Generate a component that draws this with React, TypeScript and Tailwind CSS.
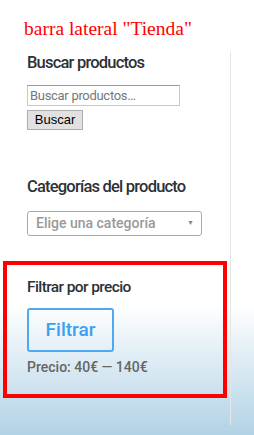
export default function App() {
  return (
    <div
      className="w-[254px] h-[435px] overflow-hidden bg-[linear-gradient(to_bottom,#ffffff_0%,#ffffff_70%,#b2d2e6_100%)]"
      style={{ fontFamily: "Roboto, 'Liberation Sans', sans-serif" }}
    >
      {/* title */}
      <div className="h-[52px] pl-[24px] pt-[17px]">
        <p
          className="text-[19.5px] leading-[24px] text-[#ff0000]"
          style={{ fontFamily: "'Liberation Serif', serif" }}
        >
          barra lateral "Tienda"
        </p>
      </div>

      {/* sidebar */}
      <div className="w-[231px] h-[373px] border-r border-[#e6e6e6]">
        <div className="pl-[27px]">
          <h2 className="text-[16.5px] leading-[22px] font-medium tracking-[-0.8px] text-[#2d3136]">
            Buscar productos
          </h2>
          <input
            type="text"
            placeholder="Buscar productos…"
            className="mt-[11px] block w-[153px] h-[21px] px-[2px] text-[13px] tracking-[-0.3px] border border-[#c8c8c8] border-t-[#999] bg-white placeholder:text-[#777] outline-none"
          />
          <button
            className="mt-[4px] block w-[56px] h-[20px] text-[13px] leading-[18px] text-black bg-[#e1e1e1] border border-[#adadad]"
            style={{ fontFamily: "'Liberation Sans', Arial, sans-serif" }}
          >
            Buscar
          </button>

          <h2 className="mt-[46px] text-[16.5px] leading-[22px] font-medium tracking-[-0.8px] text-[#2d3136]">
            Categorías del producto
          </h2>
          <div className="mt-[13px] w-[175px] h-[25px] flex items-center justify-between pl-[8px] pr-[7px] rounded-[3px] border border-[#aaa] bg-white">
            <span className="text-[14px] font-medium text-[#999]">Elige una categoría</span>
            <span className="text-[7px] text-[#888]">▼</span>
          </div>
        </div>

        {/* price filter */}
        <div className="mt-[25px] mx-[3px] h-[137px] border-[4px] border-[#ff0000] px-[20px] pt-[12px]">
          <h2 className="text-[15.5px] leading-[21px] font-medium tracking-[-0.6px] text-[#2d3136]">
            Filtrar por precio
          </h2>
          <button className="mt-[10px] block w-[87px] h-[44px] rounded-[3px] border-2 border-[#4fa9f2] text-[19px] font-medium text-[#3ca0f0] bg-transparent">
            Filtrar
          </button>
          <p className="mt-[6px] text-[14px] leading-[18px] font-medium text-[#666]">
            Precio: 40€ — 140€
          </p>
        </div>
      </div>
    </div>
  );
}
